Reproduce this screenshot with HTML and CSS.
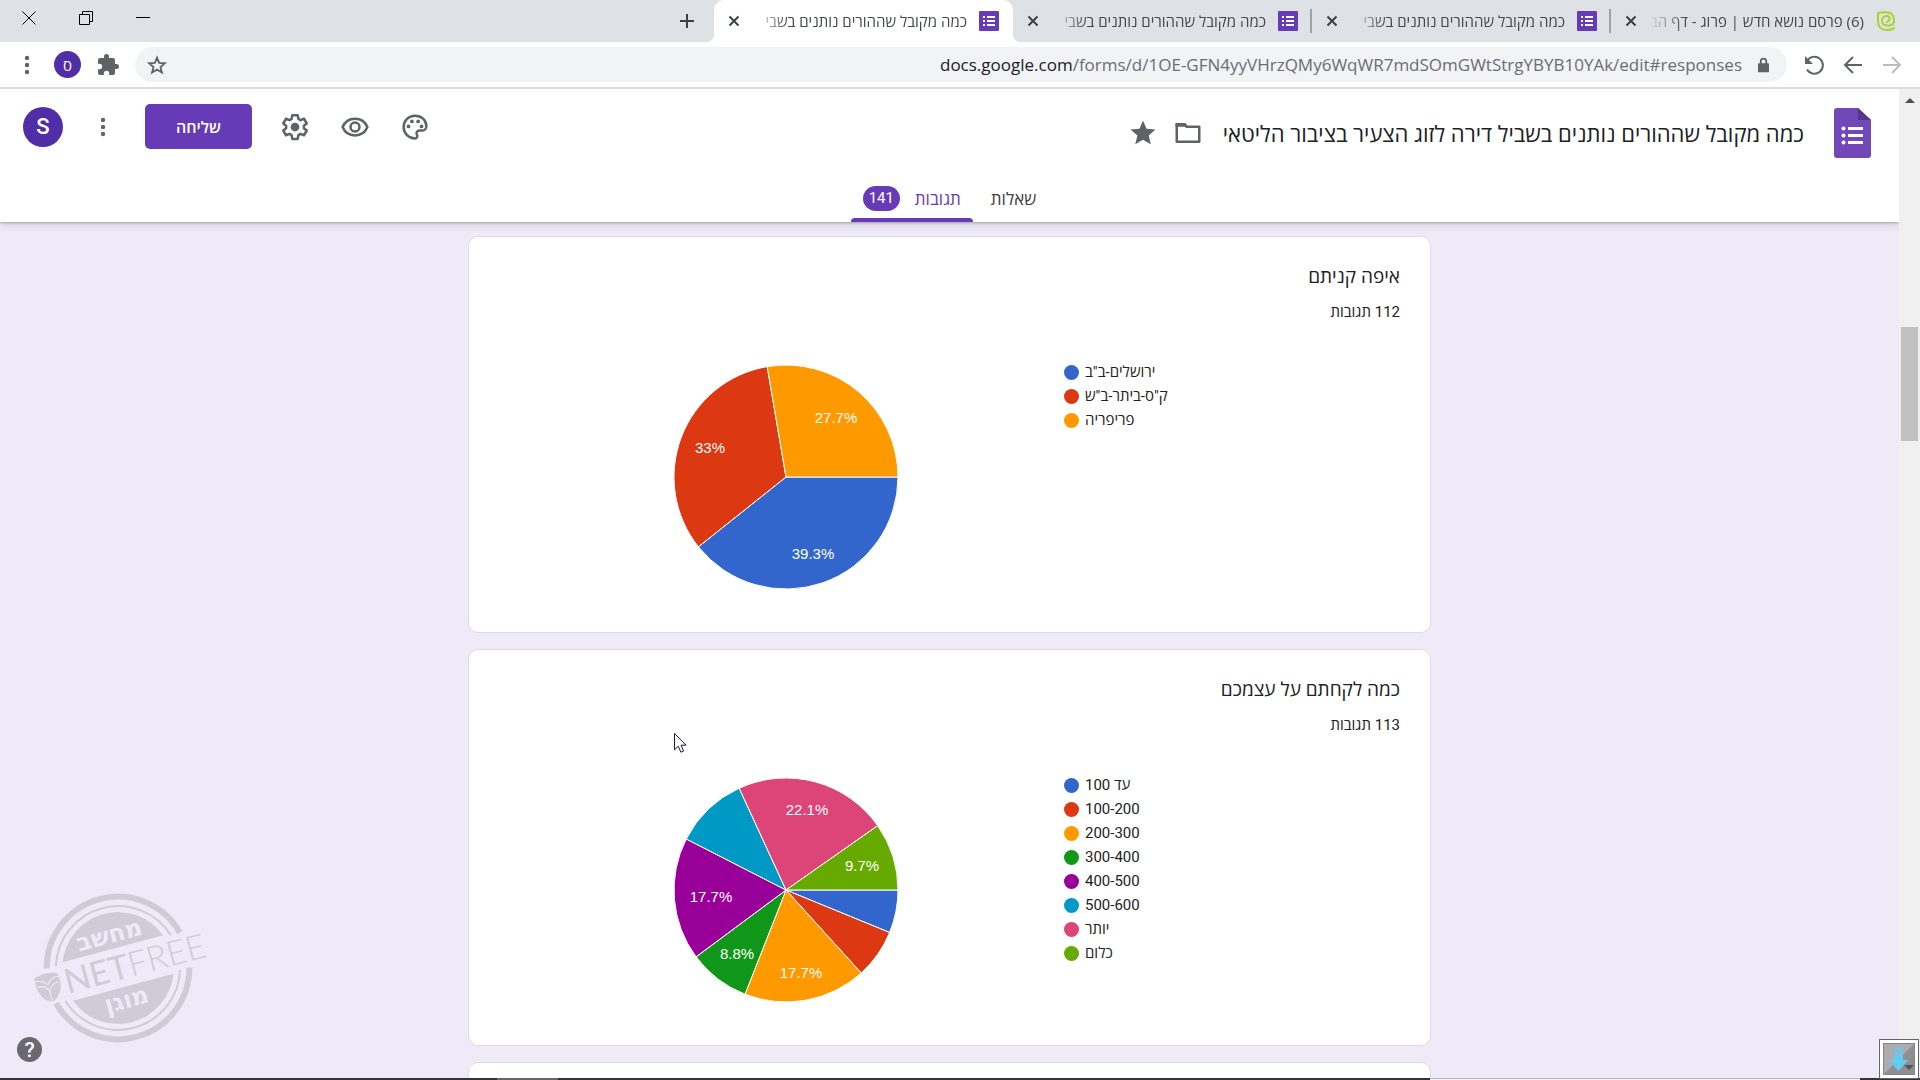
FILE: index.html
```html
<!DOCTYPE html>
<html lang="he" dir="rtl">
<head>
    <meta charset="UTF-8">
    <meta name="viewport" content="width=device-width, initial-scale=1.0">
    <title>כמה מקובל שההורים נותנים בשביל דירה לזוג הצעיר בציבור הליטאי</title>
    <link rel="stylesheet" href="styles.css">
</head>
<body>
    <svg class="defs" aria-hidden="true">
        <symbol id="form-icon" viewBox="0 0 20 20">
            <rect width="20" height="20" rx="1" fill="#673ab7"/>
            <path d="M4 5h2v2H4zM8 5h8v2H8zM4 9h2v2H4zM8 9h8v2H8zM4 13h2v2H4zM8 13h8v2H8z" fill="#fff"/>
        </symbol>
        <symbol id="close-icon" viewBox="0 0 12 12">
            <path d="M1.5 1.5l9 9M10.500 1.500l-9 9" stroke="#3c4043" stroke-width="2" fill="none"/>
        </symbol>
        <symbol id="dots-icon" viewBox="0 0 24 24">
            <circle cx="12" cy="5" r="2.200"/><circle cx="12" cy="12" r="2.200"/><circle cx="12" cy="19" r="2.200"/>
        </symbol>
    </svg>

    <!-- tab strip -->
    <div class="tab-strip">
        <div class="tab">
            <svg class="favicon" viewBox="0 0 20 20"><path d="M2 2v9c0 5 4 8 8 8 3 0 6 0 8-2M2 2c5-1 13-2 15 3 2 5 1 9-3 9.500-5 .5-8-1-8-5C6 6 9 4.500 11 5c4 1 3 5 0 6" fill="none" stroke="#a9d62b" stroke-width="2" stroke-linecap="round"/></svg>
            <span class="tab-title">(6) פרסם נושא חדש | פרוג - דף הב</span>
            <button class="tab-close" aria-label="סגירה"><svg><use href="#close-icon"/></svg></button>
        </div>
        <div class="tab separated">
            <svg class="favicon"><use href="#form-icon"/></svg>
            <span class="tab-title">כמה מקובל שההורים נותנים בשבי</span>
            <button class="tab-close" aria-label="סגירה"><svg><use href="#close-icon"/></svg></button>
        </div>
        <div class="tab separated">
            <svg class="favicon"><use href="#form-icon"/></svg>
            <span class="tab-title">כמה מקובל שההורים נותנים בשבי</span>
            <button class="tab-close" aria-label="סגירה"><svg><use href="#close-icon"/></svg></button>
        </div>
        <div class="tab active">
            <svg class="favicon"><use href="#form-icon"/></svg>
            <span class="tab-title">כמה מקובל שההורים נותנים בשבי</span>
            <button class="tab-close" aria-label="סגירה"><svg><use href="#close-icon"/></svg></button>
        </div>
        <button class="new-tab" aria-label="כרטיסייה חדשה"><svg viewBox="0 0 16 16"><path d="M8 1v14M1 8h14" stroke="#3c4043" stroke-width="2"/></svg></button>
        <div class="window-controls">
            <button aria-label="מזעור"><svg viewBox="0 0 14 14"><path d="M0 6.500h14" stroke="#000"/></svg></button>
            <button aria-label="שחזור"><svg viewBox="0 0 14 14"><path d="M.5 3.500h10v10H.5zM3.500 3.500V.5h10v10h-3" fill="none" stroke="#000"/></svg></button>
            <button aria-label="סגירת החלון"><svg viewBox="0 0 14 14"><path d="M.5.5l13 13M13.500.5l-13 13" stroke="#000"/></svg></button>
        </div>
    </div>

    <!-- toolbar -->
    <div class="toolbar">
        <button aria-label="קדימה"><svg viewBox="0 0 24 24"><path d="M3 12h17M12 4l8 8-8 8" fill="none" stroke="#babcbe" stroke-width="2"/></svg></button>
        <button aria-label="אחורה"><svg viewBox="0 0 24 24"><path d="M21 12H4M12 4l-8 8 8 8" fill="none" stroke="#5f6368" stroke-width="2"/></svg></button>
        <button aria-label="טעינה מחדש"><svg viewBox="0 0 24 24"><path d="M5 8a8.500 8.500 0 1 1 0 8.500" fill="none" stroke="#5f6368" stroke-width="2"/><path d="M3 3v8h8z" fill="#5f6368"/></svg></button>
        <div class="omnibox">
            <svg class="lock" viewBox="0 0 12 16"><path d="M3 7V4a3 3 0 0 1 6 0v3" fill="none" stroke="#5f6368" stroke-width="2"/><rect y="6" width="12" height="10" rx="1" fill="#5f6368"/></svg>
            <div class="url" dir="ltr">docs.google.com<span>/forms/d/1OE-GFN4yyVHrzQMy6WqWR7mdSOmGWtStrgYBYB10YAk/edit#responses</span></div>
            <button class="bookmark" aria-label="סימנייה"><svg viewBox="0 0 24 24"><path d="M12 4l2.300 5.700 6.200.5-4.700 4 1.500 6-5.300-3.300-5.300 3.300 1.500-6-4.700-4 6.200-.5z" fill="none" stroke="#5f6368" stroke-width="2"/></svg></button>
        </div>
        <button aria-label="תוספים"><svg viewBox="0 0 24 24"><path d="M20.500 11H19V7a2 2 0 0 0-2-2h-4V3.500a2.500 2.500 0 0 0-5 0V5H4a2 2 0 0 0-2 2v3.800h1.500a2.700 2.700 0 0 1 0 5.400H2V20a2 2 0 0 0 2 2h3.800v-1.500a2.700 2.700 0 0 1 5.400 0V22H17a2 2 0 0 0 2-2v-4h1.500a2.500 2.500 0 0 0 0-5z" fill="#5f6368"/></svg></button>
        <button class="profile" aria-label="פרופיל">ס</button>
        <button aria-label="תפריט"><svg fill="#5f6368"><use href="#dots-icon"/></svg></button>
    </div>

    <div class="viewport">
        <div class="scrollbar"><span class="scroll-up"></span><span class="scroll-thumb"></span></div>
        <div class="page">
            <header class="app-header">
                <div class="header-row">
                    <div class="doc">
                        <svg class="doc-logo" viewBox="0 0 37 50"><path d="M3 0h21l13 12v35a3 3 0 0 1-3 3H3a3 3 0 0 1-3-3V3a3 3 0 0 1 3-3z" fill="#7248b9"/><path d="M24 0l13 12H24z" fill="#56368a"/><path d="M14 19h15v3H14zM14 26h15v3H14zM14 33h15v3H14z" fill="#fff"/><g fill="#fff"><circle cx="9.500" cy="20.500" r="2"/><circle cx="9.500" cy="27.500" r="2"/><circle cx="9.500" cy="34.500" r="2"/></g></svg>
                        <h1>כמה מקובל שההורים נותנים בשביל דירה לזוג הצעיר בציבור הליטאי</h1>
                        <button class="doc-action" aria-label="העברה לתיקייה"><svg viewBox="0 0 24 24"><path d="M3 5h6l2 2h10v12H3z" fill="none" stroke="#5f6368" stroke-width="2" stroke-linejoin="round"/><path d="M2 4h8l2 3H2z" fill="#5f6368"/></svg></button>
                        <button class="doc-action" aria-label="כוכב"><svg viewBox="0 0 24 24"><path d="M12 17.300l6.200 3.700-1.600-7L22 9.200l-7.200-.6L12 2 9.200 8.600 2 9.200 7.500 14l-1.700 7z" fill="#5f6368"/></svg></button>
                    </div>
                    <div class="actions">
                        <button class="icon-button" aria-label="עיצוב"><svg viewBox="0 0 24 24"><path d="M12 2.900a9.100 9.100 0 1 0 0 18.200c1.500 0 2.300-1.600 1.500-2.900-1-1.700.3-3.400 2-3.400H18c1.800 0 3.100-1.500 3.100-3.500C21.100 6.400 17 2.900 12 2.900z" fill="none" stroke="#5f6368" stroke-width="2"/><g fill="#5f6368"><circle cx="6.800" cy="11.500" r="1.500"/><circle cx="9.500" cy="7.500" r="1.500"/><circle cx="14.500" cy="7.500" r="1.500"/><circle cx="17.200" cy="11.500" r="1.500"/></g></svg></button>
                        <button class="icon-button" aria-label="תצוגה מקדימה"><svg viewBox="0 0 24 24"><path d="M2.100 12C3.700 8 7.500 5.300 12 5.300S20.300 8 21.900 12c-1.600 4-5.400 6.700-9.900 6.700S3.700 16 2.100 12z" fill="none" stroke="#5f6368" stroke-width="2"/><circle cx="12" cy="12" r="3.600" fill="none" stroke="#5f6368" stroke-width="2"/></svg></button>
                        <button class="icon-button" aria-label="הגדרות"><svg viewBox="0 0 24 24"><path d="M9.800 2.500h4.400l.5 3 1.700 1 2.800-1.100 2.200 3.800-2.300 1.800v2l2.300 1.800-2.200 3.800-2.800-1.100-1.700 1-.5 3H9.800l-.5-3-1.700-1-2.800 1.100-2.200-3.800L4.900 13v-2L2.600 9.200l2.200-3.800 2.800 1.100 1.700-1z" fill="none" stroke="#5f6368" stroke-width="2" stroke-linejoin="round"/><circle cx="12" cy="12" r="3.500" fill="#5f6368"/></svg></button>
                        <button class="send">שליחה</button>
                        <button class="icon-button more" aria-label="עוד"><svg viewBox="0 0 24 24" fill="#5f6368"><use href="#dots-icon"/></svg></button>
                        <button class="account" aria-label="חשבון">S</button>
                    </div>
                </div>
                <nav class="form-tabs">
                    <a href="#questions" class="form-tab">שאלות</a>
                    <a href="#responses" class="form-tab selected">תגובות <span class="count">141</span></a>
                </nav>
            </header>

            <main class="cards">
                <section class="card">
                    <h2>איפה קניתם</h2>
                    <p class="responses">112 תגובות</p>
                    <div class="chart" dir="ltr">
                        <svg class="pie" viewBox="-117 -117 234 234">
                            <path fill="#3366cc" d="M0 0L112 0A112 112 0 0 1 -87.600 69.800z"/>
                            <path fill="#dc3912" d="M0 0L-87.600 69.800A112 112 0 0 1 -18.800 -110.400z"/>
                            <path fill="#ff9900" d="M0 0L-18.800 -110.400A112 112 0 0 1 112 0z"/>
                            <text x="27" y="82">39.3%</text>
                            <text x="-76" y="-24">33%</text>
                            <text x="50" y="-54">27.7%</text>
                        </svg>
                        <ul class="legend">
                            <li class="blue">ירושלים-ב"ב</li>
                            <li class="red">ק"ס-ביתר-ב"ש</li>
                            <li class="orange">פריפריה</li>
                        </ul>
                    </div>
                </section>

                <section class="card">
                    <h2>כמה לקחתם על עצמכם</h2>
                    <p class="responses">113 תגובות</p>
                    <div class="chart" dir="ltr">
                        <svg class="pie" viewBox="-117 -117 234 234">
                            <path fill="#3366cc" d="M0 0L112 0A112 112 0 0 1 103.600 42.500z"/>
                            <path fill="#dc3912" d="M0 0L103.600 42.500A112 112 0 0 1 75.200 83z"/>
                            <path fill="#ff9900" d="M0 0L75.200 83A112 112 0 0 1 -41 104.200z"/>
                            <path fill="#109618" d="M0 0L-41 104.200A112 112 0 0 1 -89.900 66.800z"/>
                            <path fill="#990099" d="M0 0L-89.900 66.800A112 112 0 0 1 -99.700 -51z"/>
                            <path fill="#0099c6" d="M0 0L-99.700 -51A112 112 0 0 1 -46.800 -101.800z"/>
                            <path fill="#dd4477" d="M0 0L-46.800 -101.800A112 112 0 0 1 91.700 -64.300z"/>
                            <path fill="#66aa00" d="M0 0L91.700 -64.300A112 112 0 0 1 112 0z"/>
                            <text x="15" y="88">17.7%</text>
                            <text x="-49" y="69">8.8%</text>
                            <text x="-75" y="12">17.7%</text>
                            <text x="21" y="-75">22.1%</text>
                            <text x="76" y="-19">9.7%</text>
                        </svg>
                        <ul class="legend">
                            <li class="blue">עד 100</li>
                            <li class="red">100-200</li>
                            <li class="orange">200-300</li>
                            <li class="green">300-400</li>
                            <li class="purple">400-500</li>
                            <li class="cyan">500-600</li>
                            <li class="pink">יותר</li>
                            <li class="lime">כלום</li>
                        </ul>
                    </div>
                </section>

                <section class="card"></section>
            </main>

            <svg class="stamp" viewBox="0 0 180 160">
                <g transform="rotate(-15 88 80)" fill="#d0ccd7">
                    <g fill="none" stroke="#d0ccd7">
                        <path d="M19 62A71.300 71.300 0 0 1 157 62M19 98A71.300 71.300 0 0 0 157 98" stroke-width="6"/>
                        <path d="M28.500 62A62.300 62.300 0 0 1 147.500 62M28.500 98A62.300 62.300 0 0 0 147.500 98" stroke-width="2"/>
                    </g>
                    <path d="M36 60A55.600 55.600 0 0 1 140 60zM36 100A55.600 55.600 0 0 0 140 100z"/>
                    <text class="stamp-word" x="88" y="54">מחשב</text>
                    <text class="stamp-word" x="88" y="121">מוגן</text>
                    <text class="stamp-brand" x="33" y="92" direction="ltr"><tspan class="stamp-net">NET</tspan>FREE</text>
                    <path d="M4 69q12-5 24 0l1 5q0 17-13 22Q4 91 4 74z"/>
                    <path d="M1 73q9-3 15 5 6-8 14-5M5 78q8-1 11 7 4-8 11-7M16 85v11" fill="none" stroke="#eeeaf7" stroke-width="1"/>
                </g>
            </svg>
            <button class="help" aria-label="עזרה">?</button>
            <svg class="pointer" viewBox="0 0 13 20"><path d="M.5.5v16.300l3.700-3.600 2.700 6 2.700-1.200-2.600-5.800h5z" fill="#fff" stroke="#1a1a2e"/></svg>
        </div>
    </div>

    <div class="taskbar"><span class="task-active"></span><span class="task-search"></span></div>
    <button class="download" aria-label="הורדה"><svg viewBox="0 0 32 32"><rect width="32" height="32" fill="#8f8f92"/><path d="M1 1h30L1 31z" fill="#adabb0"/><rect x=".5" y=".5" width="31" height="31" fill="none" stroke="#858585"/><path d="M11 5h9v2h-9zM11 8h9v2h-9zM11 11h9v6h5l-9.500 11L6 17h5z" fill="#62ccf2"/><path d="M21 22h10l-5 5z" fill="#555"/></svg></button>
</body>
</html>
```
FILE: styles.css
```css
:root { --purple: #673ab7; --grey: #5f6368; --page-bg: #eeeaf7; --hebrew: "Open Sans", "Noto Sans", "Liberation Sans", sans-serif; }
* { box-sizing: border-box; }
body { height: 100vh; margin: 0; overflow: hidden; display: flex; flex-direction: column; font-family: Roboto, "Open Sans", "Liberation Sans", sans-serif; color: #202124; background: #fff; }
button { display: flex; align-items: center; justify-content: center; padding: 0; border: none; background: none; cursor: pointer; font-family: inherit; }
.defs { position: absolute; width: 0; height: 0; }

/* tab strip */
.tab-strip { flex: none; display: flex; height: 42px; padding-right: 10px; background: #dee1e6; font-family: var(--hebrew); }
.tab { position: relative; display: flex; align-items: center; gap: 12px; width: 299px; padding: 0 14px; }
.tab.active { background: #fff; border-radius: 10px 10px 0 0; }
.tab.active::before, .tab.active::after { content: ""; position: absolute; bottom: 0; width: 8px; height: 8px; }
.tab.active::before { left: 100%; background: radial-gradient(circle at 100% 0, transparent 8px, #fff 8px); }
.tab.active::after { right: 100%; background: radial-gradient(circle at 0 0, transparent 8px, #fff 8px); }
.tab.separated { background: linear-gradient(#a0a3a8, #a0a3a8) right center / 2px 24px no-repeat; }
.favicon { flex: none; width: 20px; height: 20px; }
.tab-title { flex: 1; white-space: nowrap; font-size: 15px; line-height: 20px; color: #45484c; mask-image: linear-gradient(to right, transparent, #000 36px); }
.tab-close, .tab-close svg { width: 12px; height: 12px; }
.new-tab { width: 54px; }
.new-tab svg { width: 16px; height: 16px; }
.window-controls { display: flex; margin-right: auto; height: 36px; }
.window-controls button { width: 57px; }
.window-controls svg { width: 14px; height: 14px; }

/* toolbar */
.toolbar { flex: none; display: flex; align-items: center; gap: 15px; height: 47px; padding: 0 16px 0 15px; border-bottom: 2px solid #dadce0; }
.toolbar > button, .toolbar > button svg { width: 24px; height: 24px; }
.toolbar svg { width: 22px; height: 22px; }
.omnibox { flex: 1; display: flex; align-items: center; gap: 16px; height: 35px; padding: 0 18px 0 11px; border-radius: 18px; background: #f1f3f4; }
.omnibox .lock { width: 11px; height: 16px; }
.url { flex: 1; text-align: right; font-family: "Open Sans", "Noto Sans", sans-serif; font-size: 17px; line-height: 24px; color: #202124; white-space: nowrap; }
.url span { color: #6a6e73; }
.toolbar .profile { width: 27px; height: 27px; border-radius: 50%; background: #512da8; color: #fff; font-size: 15px; }

/* page */
.viewport { flex: 1; display: flex; min-height: 0; }
.scrollbar { flex: none; display: flex; flex-direction: column; align-items: center; width: 21px; padding-top: 9px; background: #f0f0f0; }
.scroll-up { border: 5px solid transparent; border-top: 0; border-bottom-color: #505050; }
.scroll-thumb { width: 17px; height: 114px; margin-top: 224px; background: #c1c1c1; }
.page { position: relative; flex: 1; min-width: 0; overflow: hidden; background: var(--page-bg); }
.app-header { position: relative; height: 133px; background: #fff; box-shadow: 0 1px 2px rgba(60,64,67,.3), 0 2px 8px rgba(60,64,67,.2); }
.header-row { display: flex; justify-content: space-between; height: 85px; padding: 15px 28px 0 23px; }
.doc { display: flex; align-items: center; height: 58px; }
.doc-logo { width: 37px; height: 50px; margin-left: 30px; }
h1 { margin: 0 0 0 20px; font-family: var(--hebrew); font-size: 22px; font-weight: 400; line-height: 30px; }
.doc-action { width: 30px; margin-left: 15px; }
.doc-action svg { width: 30px; height: 30px; }
.actions { display: flex; align-items: center; height: 45px; }
.icon-button { width: 30px; margin-left: 30px; }
.icon-button svg { width: 30px; height: 30px; }
.send { width: 107px; height: 45px; margin: 0 -2px 0 27px; border-radius: 5px; background: var(--purple); color: #fff; font-family: var(--hebrew); font-size: 16px; font-weight: 600; }
.more { margin-left: 25px; }
.more svg { width: 24px; height: 24px; }
.account { width: 40px; height: 40px; border-radius: 50%; background: #512da8; color: #fff; font-size: 22px; font-weight: 500; }
.form-tabs { display: flex; justify-content: center; gap: 6px; height: 48px; }
.form-tab { display: flex; align-items: center; gap: 15px; padding: 4px 12px 0; border-bottom: 4px solid transparent; color: #3c4043; font-family: var(--hebrew); font-size: 17px; text-decoration: none; }
.form-tab.selected { color: var(--purple); position: relative; }
.form-tab.selected::after { content: ""; position: absolute; right: 0; bottom: -4px; left: 0; height: 4px; border-radius: 4px 4px 0 0; background: var(--purple); }
.count { width: 37px; border-radius: 13px; background: var(--purple); color: #fff; font-family: Roboto, sans-serif; font-size: 15px; line-height: 25px; text-align: center; }

/* response cards */
.cards { display: flex; flex-direction: column; gap: 16px; width: 963px; margin: 14px auto 0; }
.card { min-height: 60px; padding: 27px 30px 38px; border: 1px solid #dadce0; border-radius: 10px; background: #fff; }
h2 { margin: 0; font-family: var(--hebrew); font-size: 19px; font-weight: 400; line-height: 24px; }
.responses { margin: 14px 0 38px; font-size: 15px; line-height: 20px; }
.chart { display: flex; gap: 161px; padding-left: 170px; }
.pie { width: 234px; height: 234px; }
.pie path { stroke: #fff; stroke-width: 1; }
.pie text { fill: #fff; font-family: "Liberation Sans", Arial, sans-serif; font-size: 15px; text-anchor: middle; }
.legend { margin: 0; padding: 0; list-style: none; font-size: 15px; line-height: 24px; color: #222; }
.legend li { display: flex; align-items: center; gap: 6px; }
.legend li::before { content: ""; width: 15px; height: 15px; border-radius: 50%; background: currentColor; }
.legend .blue::before { background: #3366cc; }
.legend .red::before { background: #dc3912; }
.legend .orange::before { background: #ff9900; }
.legend .green::before { background: #109618; }
.legend .purple::before { background: #990099; }
.legend .cyan::before { background: #0099c6; }
.legend .pink::before { background: #dd4477; }
.legend .lime::before { background: #66aa00; }

/* floating bits */
.stamp { position: absolute; bottom: 32px; left: 30px; width: 180px; height: 160px; overflow: visible; }
.stamp-word { fill: var(--page-bg); font-family: "DejaVu Sans", sans-serif; font-size: 24px; font-weight: 700; text-anchor: middle; }
.stamp-brand { font-family: Lato, sans-serif; font-size: 34px; font-weight: 300; }
.stamp-net { font-weight: 400; }
.help { position: absolute; bottom: 18px; left: 17px; width: 25px; height: 25px; border-radius: 50%; background: #6b686f; color: #fff; font-size: 21px; font-weight: 500; }
.pointer { position: absolute; top: 644px; left: 674px; width: 13px; height: 20px; }
.download { position: absolute; right: 1px; bottom: 1px; width: 40px; height: 40px; border: 1px solid #66646a; background: #fff; }
.download svg { width: 32px; height: 32px; }
.taskbar { position: absolute; right: 0; bottom: 0; left: 0; display: flex; justify-content: space-between; height: 2px; padding: 0 60px 0 497px; background: #333338; }
.task-active { order: 2; width: 61px; background: #66666a; }
.task-search { width: 430px; border-top: 1px solid #b8b8b8; background: #f2f2f2; }
```
